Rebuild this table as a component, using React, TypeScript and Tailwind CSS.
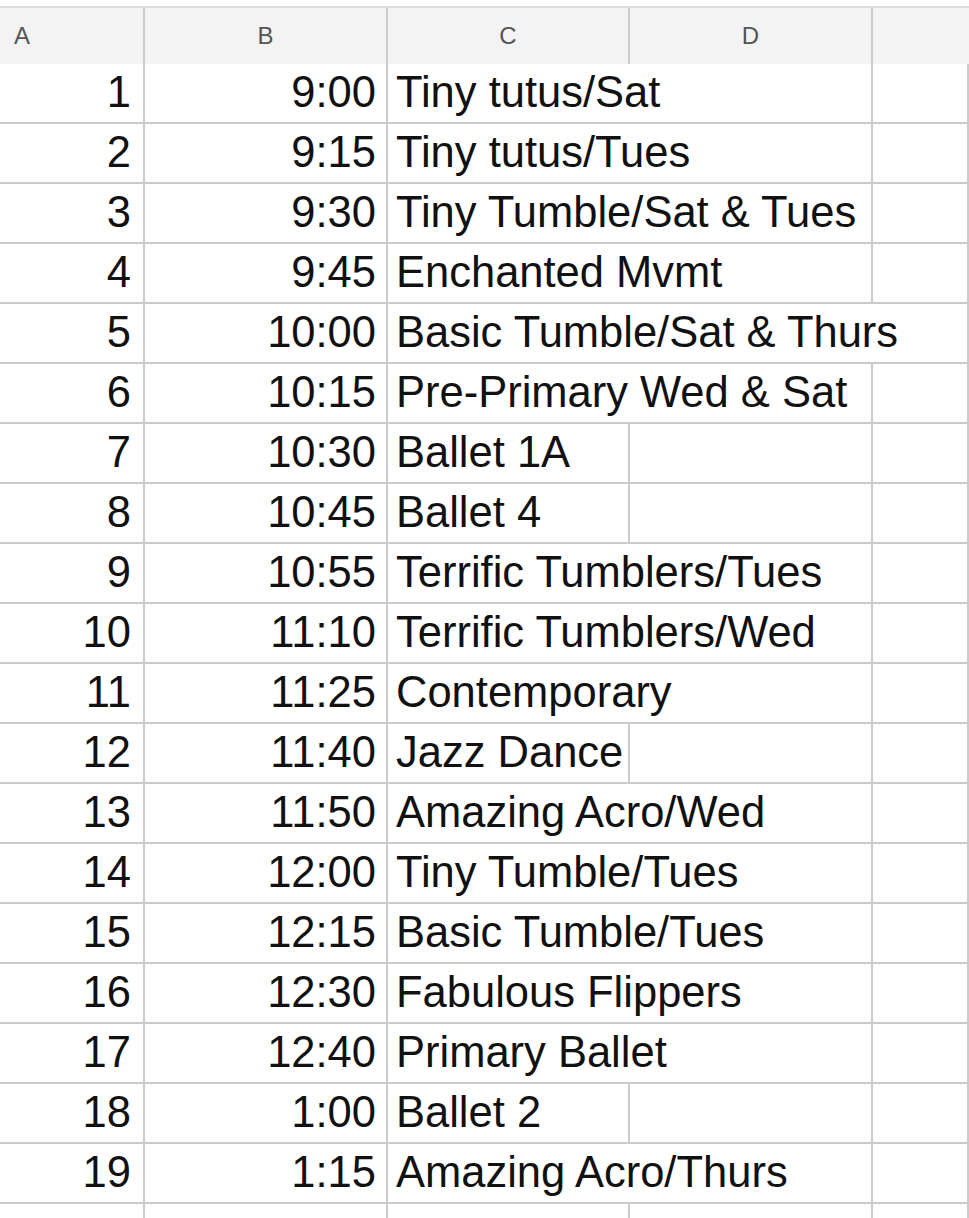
const rows: [string, string, string, number][] = [
  ["1", "9:00", "Tiny tutus/Sat", 2],
  ["2", "9:15", "Tiny tutus/Tues", 2],
  ["3", "9:30", "Tiny Tumble/Sat & Tues", 2],
  ["4", "9:45", "Enchanted Mvmt", 2],
  ["5", "10:00", "Basic Tumble/Sat & Thurs", 3],
  ["6", "10:15", "Pre-Primary Wed & Sat", 2],
  ["7", "10:30", "Ballet 1A", 1],
  ["8", "10:45", "Ballet 4", 1],
  ["9", "10:55", "Terrific Tumblers/Tues", 2],
  ["10", "11:10", "Terrific Tumblers/Wed", 2],
  ["11", "11:25", "Contemporary", 2],
  ["12", "11:40", "Jazz Dance", 1],
  ["13", "11:50", "Amazing Acro/Wed", 2],
  ["14", "12:00", "Tiny Tumble/Tues", 2],
  ["15", "12:15", "Basic Tumble/Tues", 2],
  ["16", "12:30", "Fabulous Flippers", 2],
  ["17", "12:40", "Primary Ballet", 2],
  ["18", "1:00", "Ballet 2", 1],
  ["19", "1:15", "Amazing Acro/Thurs", 2],
  ["", "", "", 1],
]

const spanClass: Record<number, string> = {
  1: "col-span-1",
  2: "col-span-2",
  3: "col-span-3",
}

const cell = "border-r-2 border-b-2 border-[#cbcbcb] h-[60px] flex items-center"
const head = "h-[56px] bg-[#f3f3f3] border-r-2 border-[#cbcbcb] flex items-center text-[24px] text-[#555]"

export default function App() {
  return (
    <div className="w-[969px] h-[1218px] overflow-hidden bg-white pt-[6px] font-['Liberation_Sans',Arial,sans-serif] text-[#111]">
      <div className="grid grid-cols-[145px_243px_242px_243px_1fr] border-t-2 border-[#dcdcdc]">
        {/* column headers */}
        <div className={`${head} pl-[14px]`}>A</div>
        <div className={`${head} justify-center`}>B</div>
        <div className={`${head} justify-center`}>C</div>
        <div className={`${head} justify-center`}>D</div>
        <div className="h-[56px] bg-[#f3f3f3]" />

        {rows.map(([n, time, name, span], i) => (
          <div key={i} className="contents">
            <div className={`${cell} justify-end pr-[12px] text-[43.5px]`}>{n}</div>
            <div className={`${cell} justify-end pr-[10px] text-[43.5px]`}>{time}</div>
            <div className={`${cell} ${spanClass[span]} pl-[8px] text-[43.5px] whitespace-nowrap overflow-hidden`}>{name}</div>
            {span < 2 && <div className={cell} />}
            {span < 3 && <div className={`${cell} border-r-0`} />}
          </div>
        ))}
      </div>
    </div>
  )
}
